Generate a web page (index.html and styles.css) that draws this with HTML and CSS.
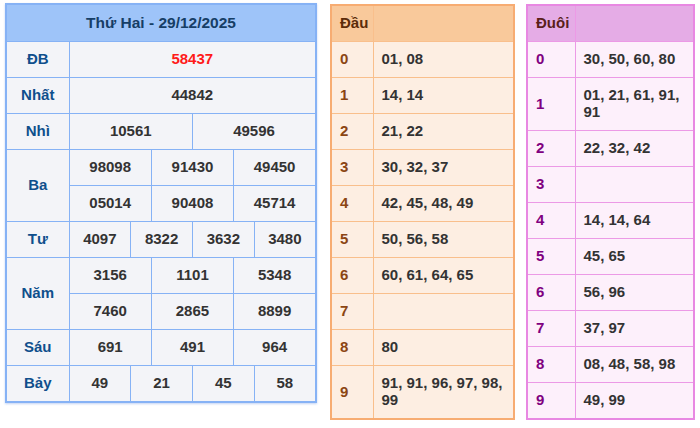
FILE: index.html
```html
<!DOCTYPE html>
<html lang="vi">
<head>
<meta charset="utf-8">
<title>XSMB</title>
<link rel="stylesheet" href="styles.css">
</head>
<body>
<div class="wrap">
  <table class="kq">
    <colgroup>
      <col class="c-label">
      <col><col><col><col><col><col><col><col><col><col><col><col>
    </colgroup>
    <thead>
      <tr><th colspan="13" class="kq-head">Thứ Hai - 29/12/2025</th></tr>
    </thead>
    <tbody>
      <tr><td class="lbl">ĐB</td><td colspan="12" class="db">58437</td></tr>
      <tr><td class="lbl">Nhất</td><td colspan="12">44842</td></tr>
      <tr><td class="lbl">Nhì</td><td colspan="6">10561</td><td colspan="6">49596</td></tr>
      <tr><td class="lbl" rowspan="2">Ba</td><td colspan="4">98098</td><td colspan="4">91430</td><td colspan="4">49450</td></tr>
      <tr><td colspan="4">05014</td><td colspan="4">90408</td><td colspan="4">45714</td></tr>
      <tr><td class="lbl">Tư</td><td colspan="3">4097</td><td colspan="3">8322</td><td colspan="3">3632</td><td colspan="3">3480</td></tr>
      <tr><td class="lbl" rowspan="2">Năm</td><td colspan="4">3156</td><td colspan="4">1101</td><td colspan="4">5348</td></tr>
      <tr><td colspan="4">7460</td><td colspan="4">2865</td><td colspan="4">8899</td></tr>
      <tr><td class="lbl">Sáu</td><td colspan="4">691</td><td colspan="4">491</td><td colspan="4">964</td></tr>
      <tr><td class="lbl">Bảy</td><td colspan="3">49</td><td colspan="3">21</td><td colspan="3">45</td><td colspan="3">58</td></tr>
    </tbody>
  </table>

  <table class="lt dau">
    <colgroup><col class="c-dau"><col></colgroup>
    <thead><tr><th>Đầu</th><th></th></tr></thead>
    <tbody>
      <tr><td class="k">0</td><td>01, 08</td></tr>
      <tr><td class="k">1</td><td>14, 14</td></tr>
      <tr><td class="k">2</td><td>21, 22</td></tr>
      <tr><td class="k">3</td><td>30, 32, 37</td></tr>
      <tr><td class="k">4</td><td>42, 45, 48, 49</td></tr>
      <tr><td class="k">5</td><td>50, 56, 58</td></tr>
      <tr><td class="k">6</td><td>60, 61, 64, 65</td></tr>
      <tr><td class="k">7</td><td></td></tr>
      <tr><td class="k">8</td><td>80</td></tr>
      <tr><td class="k">9</td><td>91, 91, 96, 97, 98, 99</td></tr>
    </tbody>
  </table>

  <table class="lt duoi">
    <colgroup><col class="c-duoi"><col></colgroup>
    <thead><tr><th>Đuôi</th><th></th></tr></thead>
    <tbody>
      <tr><td class="k">0</td><td>30, 50, 60, 80</td></tr>
      <tr><td class="k">1</td><td>01, 21, 61, 91, 91</td></tr>
      <tr><td class="k">2</td><td>22, 32, 42</td></tr>
      <tr><td class="k">3</td><td></td></tr>
      <tr><td class="k">4</td><td>14, 14, 64</td></tr>
      <tr><td class="k">5</td><td>45, 65</td></tr>
      <tr><td class="k">6</td><td>56, 96</td></tr>
      <tr><td class="k">7</td><td>37, 97</td></tr>
      <tr><td class="k">8</td><td>08, 48, 58, 98</td></tr>
      <tr><td class="k">9</td><td>49, 99</td></tr>
    </tbody>
  </table>
</div>
</body>
</html>
```

FILE: styles.css
```css
html, body {
  margin: 0;
  padding: 0;
  background: #ffffff;
}

body {
  font-family: "Liberation Sans", Arial, sans-serif;
  font-size: 15px;
  font-weight: bold;
  color: #333333;
}

.wrap {
  display: flex;
  align-items: flex-start;
  padding: 3px 0 0 5px;
}

table {
  border-collapse: collapse;
  table-layout: fixed;
}

td, th {
  line-height: 17px;
  padding: 8px 8px 10px;
}

/* ---- main result table ---- */
.kq {
  width: 312px;
  border: 2px solid #86b2f5;
  box-shadow: 0 1px 2px rgba(80, 130, 220, 0.35);
  margin-right: 13px;
}

.kq .c-label {
  width: 63px;
}

.kq td, .kq th {
  border: 1px solid #86b2f5;
  background: #f3f4f8;
  text-align: center;
  padding: 8px 2px 10px;
}

.kq .kq-head {
  background: #9ec4f9;
  color: #163e66;
  font-size: 15.5px;
  padding: 9px 4px 10px;
}

.kq .lbl {
  color: #0f4f8c;
}

.kq .db {
  color: #ff1a1a;
}

/* ---- loto tables ---- */
.lt td, .lt th {
  text-align: left;
  vertical-align: middle;
}

.dau {
  width: 185px;
  border: 2px solid #f7ac72;
  margin-top: 1px;
  margin-right: 11px;
}

.dau .c-dau {
  width: 42px;
}

.dau td, .dau th {
  border: 1px solid #f9bf8c;
  background: #fdeee2;
}

.dau th {
  background: #f9c99b;
  color: #5c2c0a;
}

.dau .k {
  color: #8b4513;
}

.duoi {
  width: 169px;
  border: 2px solid #e888e2;
  margin-top: 1px;
}

.duoi .c-duoi {
  width: 48px;
}

.duoi td, .duoi th {
  border: 1px solid #ec9ae6;
  background: #fdf0fb;
}

.duoi th {
  background: #e5ace6;
  color: #5a1f1a;
}

.duoi .k {
  color: #800080;
}
```
